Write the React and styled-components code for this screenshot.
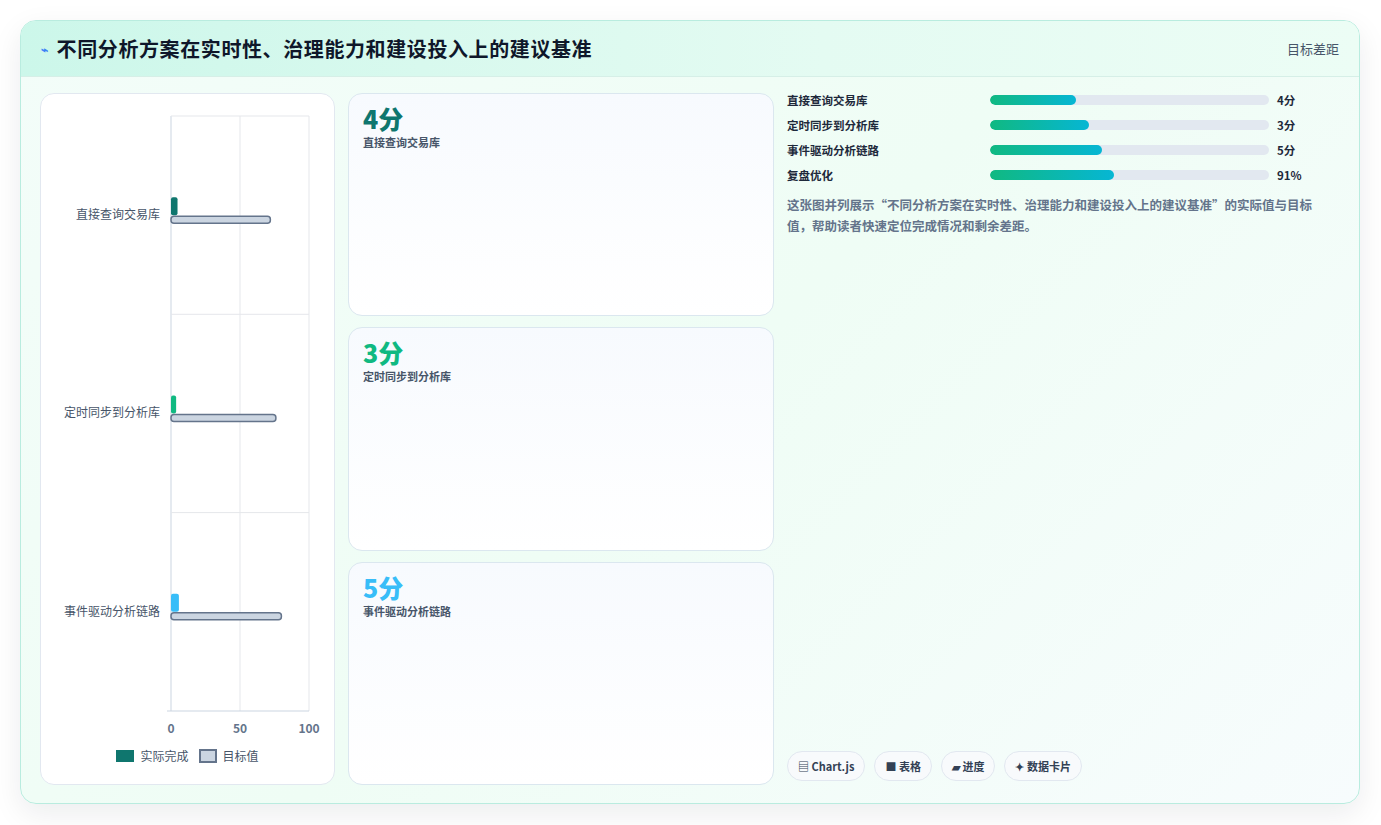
import React from "react";
import styled, { createGlobalStyle } from "styled-components";

const G = createGlobalStyle`
  body { margin: 0; background: #fff; font-family: "Noto Sans CJK SC", "Noto Sans", sans-serif; }
`;
const Page = styled.div`padding: 20px 21px 21px 20px; height: 825px; box-sizing: border-box;`;
const Card = styled.div`
  height: 784px; box-sizing: border-box; border: 1px solid #b9ecdf; border-radius: 16px; overflow: hidden;
  background: linear-gradient(135deg, #f3fdf9 0%, #effdf5 50%, #f7fcfd 100%);
  box-shadow: 0 10px 30px rgba(15, 23, 42, 0.08); display: flex; flex-direction: column;
`;
const Header = styled.div`
  height: 55px; flex: none; display: flex; align-items: center; justify-content: space-between; padding: 0 20px;
  background: linear-gradient(90deg, #ccf7ea, #e4fbf2 60%, #ecfdf5); border-bottom: 1px solid #d6efe7;
`;
const Title = styled.h1`margin: 0; font-size: 20px; letter-spacing: 0.6px; font-weight: 700; color: #0f172a; display: flex; align-items: center; gap: 8px;`;
const Bolt = styled.span`color: #3b82f6; font-size: 12px;`;
const Meta = styled.span`font-size: 13px; color: #475569;`;
const Body = styled.div`flex: 1; display: grid; grid-template-columns: 295px 426px 1fr; gap: 13px; padding: 16px 19px 18px 19px; min-height: 0;`;
const Panel = styled.div`background: #fff; border: 1px solid #e2e8f0; border-radius: 14px; display: flex; flex-direction: column; padding: 0;`;
const Legend = styled.div`display: flex; justify-content: center; gap: 10px; font-size: 12px; color: #475569; margin-top: 8px;`;
const LegItem = styled.span`display: flex; align-items: center; gap: 6px;`;
const Swatch = styled.span`width: ${p => p.$o ? 14 : 18}px; height: ${p => p.$o ? 10 : 12}px; background: ${p => p.$c}; border: ${p => p.$o ? "2px solid #64748b" : "none"};`;
const Stack = styled.div`display: grid; grid-template-rows: repeat(3, 1fr); gap: 11px;`;
const Metric = styled.div`border: 1px solid #dbe7ef; border-radius: 14px; background: linear-gradient(180deg, #f7fafe, #fff); padding: 8px 14px;`;
const Big = styled.div`font-size: 25px; font-weight: 800; color: ${p => p.$c}; line-height: 32px;`;
const Sub = styled.div`font-size: 11px; color: #475569; font-weight: 600;`;
const Right = styled.div`display: flex; flex-direction: column; margin-top: -6px; padding-bottom: 4px;`;
const Row = styled.div`display: grid; grid-template-columns: 203px 279px 1fr; align-items: center; height: 25px; font-size: 11.5px; font-weight: 700; color: #1e293b;`;
const Track = styled.div`height: 10px; border-radius: 5px; background: #e2e8f0; overflow: hidden; width: 279px;`;
const Fill = styled.div`height: 100%; border-radius: 5px; background: linear-gradient(90deg, #10b981, #06b6d4);`;
const Val = styled.span`padding-left: 8px;`;
const Desc = styled.p`margin: 7px 0 0; font-size: 12.5px; line-height: 21px; color: #64748b; font-weight: 600; max-width: 540px;`;
const Chips = styled.div`margin-top: auto; display: flex; gap: 9px;`;
const Chip = styled.span`border: 1px solid #e2e8f0; background: #f8fafc; border-radius: 15px; padding: 0 10px; height: 28px; display: flex; align-items: center; font-size: 11px; font-weight: 700; color: #334155;`;

const cats = [["直接查询交易库", 4, 72, "#0f766e"], ["定时同步到分析库", 3, 76, "#10b981"], ["事件驱动分析链路", 5, 80, "#38bdf8"]];

function Chart() {
  const x0 = 130, w = 138, top = 22, rowH = 198.3, bottom = 617;
  return (
    <svg width="293" height="645" style={{ display: "block" }}>
      {[0, 50, 100].map((v, i) => <line key={i} x1={x0 + v * 1.38} x2={x0 + v * 1.38} y1={top} y2={bottom} stroke={i ? "#e5e7eb" : "#cbd5e1"} />)}
      <line x1={x0} x2={x0 + w} y1={top} y2={top} stroke="#e5e7eb" />
      {[1, 2].map(i => <line key={i} x1={x0} x2={x0 + w} y1={top + rowH * i} y2={top + rowH * i} stroke="#e5e7eb" />)}
      <line x1={x0 - 4} x2={x0 + w} y1={bottom} y2={bottom} stroke="#cbd5e1" />
      {cats.map(([n, a, t, c], i) => {
        const cy = top + rowH * i + rowH / 2;
        return (
          <g key={n}>
            <text x={x0 - 11} y={cy + 4} textAnchor="end" fontSize="12" fill="#475569">{n}</text>
            <rect x={x0} y={cy - 18} width={a * 1.38 + 1} height={18} rx="2" fill={c} />
            <rect x={x0} y={cy + 1} width={t * 1.38} height={7} rx="3" fill="#cbd5e1" stroke="#64748b" strokeWidth="1.5" />
          </g>
        );
      })}
      {[0, 50, 100].map(v => <text key={v} x={x0 + v * 1.38} y={639} textAnchor="middle" fontSize="12" fill="#64748b" fontWeight="600">{v}</text>)}
    </svg>
  );
}

export default function App() {
  return (
    <Page>
      <G />
      <Card>
        <Header>
          <Title><Bolt>⌁</Bolt>不同分析方案在实时性、治理能力和建设投入上的建议基准</Title>
          <Meta>目标差距</Meta>
        </Header>
        <Body>
          <Panel>
            <Chart />
            <Legend>
              <LegItem><Swatch $c="#0f766e" />实际完成</LegItem>
              <LegItem><Swatch $c="#cbd5e1" $o />目标值</LegItem>
            </Legend>
          </Panel>
          <Stack>
            <Metric><Big $c="#0f766e">4分</Big><Sub>直接查询交易库</Sub></Metric>
            <Metric><Big $c="#10b981">3分</Big><Sub>定时同步到分析库</Sub></Metric>
            <Metric><Big $c="#38bdf8">5分</Big><Sub>事件驱动分析链路</Sub></Metric>
          </Stack>
          <Right>
            {[["直接查询交易库", 31, "4分"], ["定时同步到分析库", 35.5, "3分"], ["事件驱动分析链路", 40, "5分"], ["复盘优化", 44.5, "91%"]].map(([n, p, v]) => (
              <Row key={n}><span>{n}</span><Track><Fill style={{ width: p + "%" }} /></Track><Val>{v}</Val></Row>
            ))}
            <Desc>这张图并列展示“不同分析方案在实时性、治理能力和建设投入上的建议基准”的实际值与目标值，帮助读者快速定位完成情况和剩余差距。</Desc>
            <Chips>
              <Chip>▤ Chart.js</Chip><Chip>■ 表格</Chip><Chip>▰ 进度</Chip><Chip>✦ 数据卡片</Chip>
            </Chips>
          </Right>
        </Body>
      </Card>
    </Page>
  );
}
